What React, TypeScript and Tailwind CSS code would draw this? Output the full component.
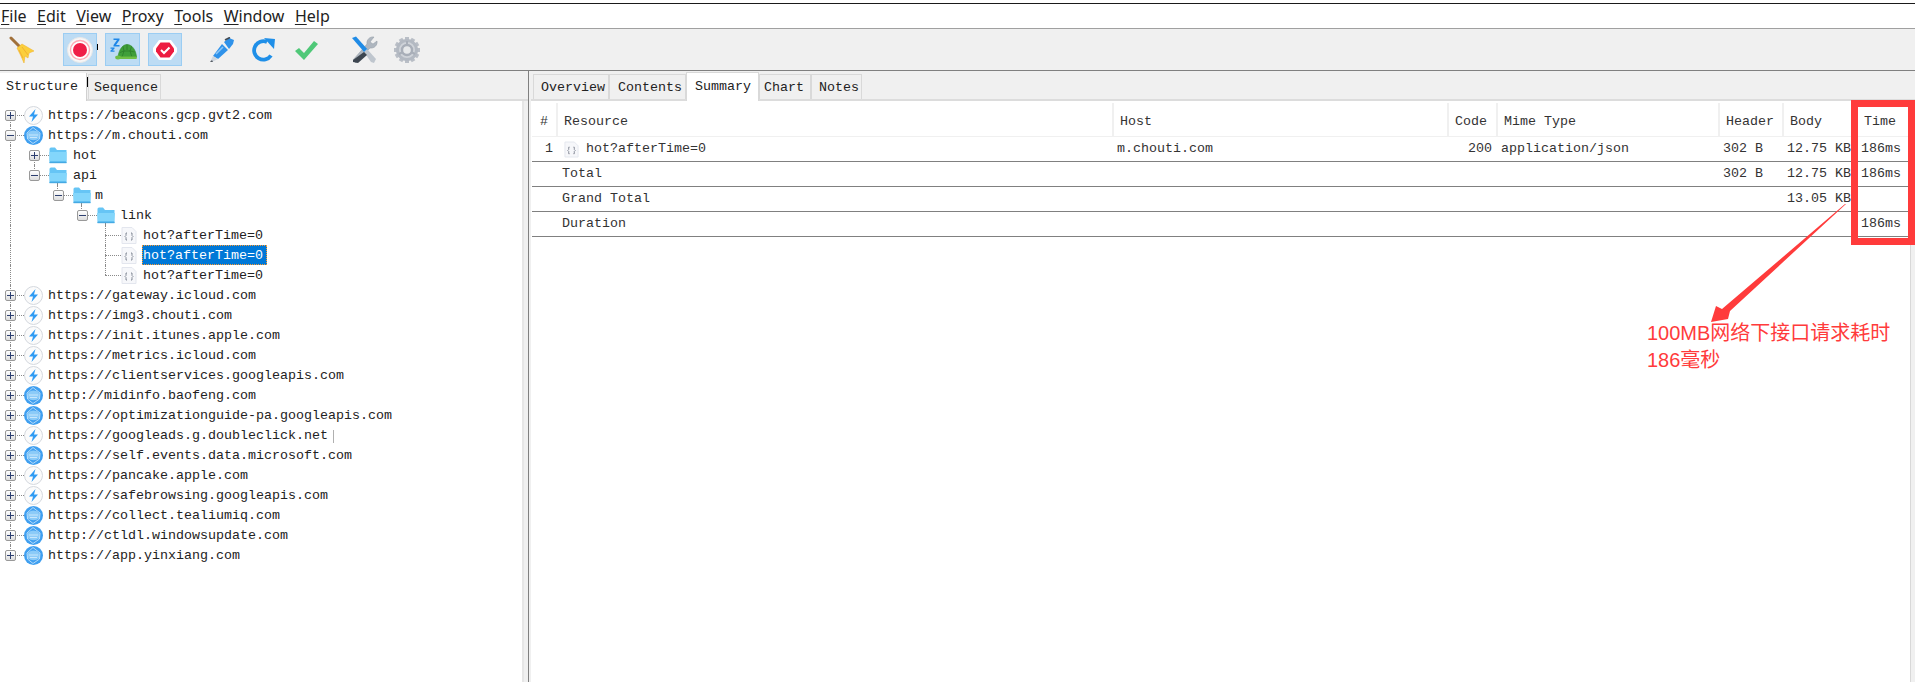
import React from "react";

const mono = "font-['Liberation_Mono','Noto_Sans_CJK_SC',monospace] text-[13.33px] text-[#222222]";

function Broom() {
  return (
    <svg width="26" height="28" viewBox="0 0 26 28">
      <path d="M2 2 L11 11" stroke="#a0703a" strokeWidth="3" strokeLinecap="round" />
      <path d="M8 12 L13 8 L25 15 L20 17 L19 22 L16 20 L15 27 L12 20 Z" fill="#fbcf3c" stroke="#f2b632" strokeWidth="0.6" />
      <path d="M13 11 L19 19 M10 14 L14 22" stroke="#f0a92c" strokeWidth="0.8" />
    </svg>
  );
}
function RecordIcon() {
  return (
    <svg width="26" height="26" viewBox="0 0 26 26">
      <circle cx="13" cy="13" r="12.5" fill="#f7f7f7" stroke="#e8e8e8" />
      <circle cx="13" cy="13" r="9.5" fill="#ffffff" stroke="#ffa9b5" strokeWidth="1.4" />
      <circle cx="13" cy="13" r="7" fill="#ef1e47" />
    </svg>
  );
}
function TurtleIcon() {
  return (
    <svg width="28" height="26" viewBox="0 0 28 26">
      <path d="M4.5 1.5 H10.5 V3 L7 8 H10.5 V9.5 H4.5 V8 L8 3 H4.5 Z" fill="#1f87e8" />
      <path d="M1.5 10.5 H5.5 V11.7 L3.4 13.5 H5.5 V14.7 H1.5 V13.5 L3.6 11.7 H1.5 Z" fill="#1f87e8" />
      <path d="M9 20 C10 12 14 7.5 18 7.5 C23 7.5 27 13 27.5 20 Z" fill="#3f9f3a" stroke="#2f8c2b" strokeWidth="0.6" />
      <path d="M14 9.5 L15 14 L13 20 M18 7.5 V13 M22.5 9.5 L21 14 L23 20 M15 14 H21 M11 15.5 L15 14 M25.5 15 L21 14" stroke="#2a7a28" strokeWidth="0.7" fill="none" />
      <ellipse cx="9" cy="20.5" rx="2.8" ry="1.9" fill="#6fbf45" />
      <rect x="9" y="19.5" width="19" height="2.4" rx="1.2" fill="#6fbf45" />
    </svg>
  );
}
function StopIcon() {
  return (
    <svg width="24" height="20" viewBox="0 0 24 20">
      <path d="M6 0 H18 L24 8 V12 L18 20 H6 L0 12 V8 Z" fill="#ffffff" />
      <path d="M7.5 2.5 H16.5 L21 8.5 V11.5 L16.5 17.5 H7.5 L3 11.5 V8.5 Z" fill="#ed1c40" />
      <path d="M8 10 L11 13 L16.5 7.5" fill="none" stroke="#ffffff" strokeWidth="2" />
    </svg>
  );
}
function PenIcon() {
  return (
    <svg width="26" height="26" viewBox="0 0 26 26">
      <path d="M15 5 L20 1 L25 3 L24 7 L20 12 Z" fill="#2f92ea" />
      <path d="M16 3 L21 0.5" stroke="#454c55" strokeWidth="1.8" />
      <path d="M13 7 L19 13 L9 22 L4 19 Z" fill="#2f92ea" />
      <path d="M4 19 L9 22 L3 25 L1 25 Z" fill="#cfd6de" />
      <path d="M1 25 L3 23 L4 25 Z" fill="#555b63" />
      <path d="M7 17 L14 10" stroke="#8cc6f6" strokeWidth="1.6" />
    </svg>
  );
}
function RefreshIcon() {
  return (
    <svg width="24" height="26" viewBox="0 0 24 26">
      <path d="M19 18.5 A9.2 9.2 0 1 1 15 5" fill="none" stroke="#1f8fe8" strokeWidth="3.8" />
      <path d="M12 1 L23 2 L22 12 Z" fill="#1f8fe8" />
    </svg>
  );
}
function CheckIcon() {
  return (
    <svg width="24" height="22" viewBox="0 0 24 22">
      <path d="M1 12 L5 9 L10 14 L20 2 L24 5 L10 21 Z" fill="#4fc878" />
    </svg>
  );
}
function ToolsIcon() {
  return (
    <svg width="27" height="28" viewBox="0 0 27 28">
      <path d="M23 1 A6 6 0 0 0 16 8 L2 24 L5 27 L19 12 A6 6 0 0 0 26 5 L22 8 L19 6 Z" fill="#aeb6bf" stroke="#8f98a3" strokeWidth="0.5" />
      <path d="M1 2 L5 0.5 L17 14 L14 17 Z" fill="#1f8be6" />
      <path d="M13 16 L16 13 L25 23 L23 27 L20 26 Z" fill="#bfc6ce" />
      <path d="M13 16 L16 19 L7 27 L2 26 L2 24 Z" fill="#3d4650" />
    </svg>
  );
}
function GearIcon() {
  const teeth = [0, 30, 60, 90, 120, 150, 180, 210, 240, 270, 300, 330];
  return (
    <svg width="26" height="26" viewBox="0 0 26 26">
      {teeth.map((a) => (
        <rect key={a} x="11" y="0" width="4" height="5" fill="#b9bec6" transform={`rotate(${a} 13 13)`} />
      ))}
      <circle cx="13" cy="13" r="9.5" fill="#cfd3d9" stroke="#b3b9c2" strokeWidth="3" />
      <circle cx="13" cy="13" r="5" fill="#e6e8ea" stroke="#a8aeb8" strokeWidth="2.4" />
      <path d="M13 4 V8 M5 17 L9 15 M21 17 L17 15" stroke="#a8aeb8" strokeWidth="2" />
    </svg>
  );
}
function BoltIcon() {
  return (
    <svg width="19" height="19" viewBox="0 0 19 19">
      <circle cx="9.5" cy="9.5" r="9" fill="#fbfbfb" stroke="#d4d8de" />
      <path d="M11.5 3 L5 10.5 H9 L7.5 16 L14 8.5 H10 Z" fill="#2f9bf3" />
    </svg>
  );
}
function GlobeIcon() {
  return (
    <svg width="19" height="19" viewBox="0 0 19 19">
      <circle cx="9.5" cy="9.5" r="9.5" fill="#3f9ff0" />
      <path d="M3.5 8 C5 3.5 13 3 15.5 8 L15.5 12 C12 15 7 15 3.5 12 Z" fill="#8ccbf8" />
      <path d="M3 7 L9 1.5 L16 7 L15.5 13 L9 17.5 L3.5 13 Z M5 9 H14 M6 11.5 H13" fill="none" stroke="#e4f3fe" strokeWidth="0.7" />
    </svg>
  );
}
function FolderIcon({ open }: { open?: boolean }) {
  return (
    <svg width="18" height="17" viewBox="0 0 18 17">
      <path d="M0.5 2 Q0.5 0.5 2 0.5 H6 L8 3 H17.5 V16 H0.5 Z" fill="#66c5f5" />
      <path d={open ? "M0 6 H18 L17 14 H1 Z" : "M0.5 5 H17.5 V14 H0.5 Z"} fill="#83d6fb" />
      <path d="M0.5 15.5 H17.5" stroke="#45a9e2" strokeWidth="1.4" />
    </svg>
  );
}
function JsonIcon({ small }: { small?: boolean }) {
  return (
    <svg width={small ? 15 : 16} height="17" viewBox="0 0 16 17">
      <path d="M1 0.5 H11 L15 4.5 V16.5 H1 Z" fill="#f6f7fa" stroke="#e3e6ee" />
      <path d="M6 6 H5 V8.5 L4 9.5 L5 10.5 V13 H6 M10 6 H11 V8.5 L12 9.5 L11 10.5 V13 H10" fill="none" stroke="#6b7280" strokeWidth="0.8" />
    </svg>
  );
}
function Expander({ open }: { open?: boolean }) {
  return (
    <span className="absolute top-[5px] w-[11px] h-[11px] rounded-[2px] border border-[#999999] bg-gradient-to-b from-white to-[#dddddd] flex items-center justify-center z-10">
      <span className="relative w-[7px] h-[1px] bg-[#2d3f70]">
        {!open && <span className="absolute left-[3px] top-[-3px] w-[1px] h-[7px] bg-[#2d3f70]" />}
      </span>
    </span>
  );
}

type Row = {
  t: string;
  lvl: number;
  icon: "bolt" | "globe" | "folder" | "leaf";
  open?: boolean;
  exp?: boolean;
  sel?: boolean;
  mark?: boolean;
  guides: [number, number, number][];
};

const G0: [number, number, number] = [10, 0, 20];
const hosts: [string, "bolt" | "globe"][] = [
  ["https://gateway.icloud.com", "bolt"],
  ["https://img3.chouti.com", "bolt"],
  ["https://init.itunes.apple.com", "bolt"],
  ["https://metrics.icloud.com", "bolt"],
  ["https://clientservices.googleapis.com", "bolt"],
  ["http://midinfo.baofeng.com", "globe"],
  ["https://optimizationguide-pa.googleapis.com", "globe"],
  ["https://googleads.g.doubleclick.net", "bolt"],
  ["https://self.events.data.microsoft.com", "globe"],
  ["https://pancake.apple.com", "bolt"],
  ["https://safebrowsing.googleapis.com", "bolt"],
  ["https://collect.tealiumiq.com", "globe"],
  ["http://ctldl.windowsupdate.com", "globe"],
  ["https://app.yinxiang.com", "globe"],
];
const rows: Row[] = [
  { t: "https://beacons.gcp.gvt2.com", lvl: 0, icon: "bolt", exp: true, guides: [[10, 10, 10]] },
  { t: "https://m.chouti.com", lvl: 0, icon: "globe", exp: true, open: true, guides: [G0] },
  { t: "hot", lvl: 1, icon: "folder", exp: true, guides: [G0, [34, 10, 10]] },
  { t: "api", lvl: 1, icon: "folder", exp: true, open: true, guides: [G0, [34, 0, 10], [57, 18, 2]] },
  { t: "m", lvl: 2, icon: "folder", exp: true, open: true, guides: [G0, [57, 0, 10], [81, 18, 2]] },
  { t: "link", lvl: 3, icon: "folder", exp: true, open: true, guides: [G0, [81, 0, 10], [105, 18, 2]] },
  { t: "hot?afterTime=0", lvl: 4, icon: "leaf", guides: [G0, [105, 0, 20]] },
  { t: "hot?afterTime=0", lvl: 4, icon: "leaf", sel: true, guides: [G0, [105, 0, 20]] },
  { t: "hot?afterTime=0", lvl: 4, icon: "leaf", guides: [G0, [105, 0, 10]] },
  ...hosts.map(([t, icon], i): Row => ({
    t,
    icon,
    lvl: 0,
    exp: true,
    mark: t.includes("doubleclick"),
    guides: [i === hosts.length - 1 ? [10, 0, 10] : G0],
  })),
];

const levelX = [10, 34, 58, 82, 105];

function TreeRow({ r }: { r: Row }) {
  const cx = levelX[r.lvl];
  const iconLeft = r.lvl === 0 ? 24 : r.lvl === 1 ? 49 : r.lvl === 2 ? 73 : r.lvl === 3 ? 97 : 121;
  const textLeft = r.lvl === 0 ? 48 : r.lvl === 1 ? 73 : r.lvl === 2 ? 95 : r.lvl === 3 ? 120 : 143;
  return (
    <div className="relative h-5 flex items-center whitespace-nowrap">
      {r.guides.map(([x, top, h], i) => (
        <span
          key={i}
          className="absolute w-0 border-l border-dotted border-[#8a8a8a]"
          style={{ left: x, top, height: h }}
        />
      ))}
      <span
        className="absolute top-[10px] h-0 border-t border-dotted border-[#8a8a8a]"
        style={{ left: cx, width: iconLeft - cx }}
      />
      {r.exp && (
        <span className="absolute top-0 h-5 w-[11px]" style={{ left: cx - 5 }}>
          <Expander open={r.open} />
        </span>
      )}
      <span className="absolute flex items-center h-5" style={{ left: iconLeft }}>
        {r.icon === "bolt" && <BoltIcon />}
        {r.icon === "globe" && <GlobeIcon />}
        {r.icon === "folder" && <FolderIcon open={r.open} />}
        {r.icon === "leaf" && <JsonIcon />}
      </span>
      {r.sel ? (
        <span
          className="absolute top-0 h-5 leading-[19px] w-[125px] bg-[#0078d7] text-white border border-dotted border-[#ff9a2e] font-['Liberation_Mono',monospace] text-[13.33px]"
          style={{ left: 142 }}
        >
          {r.t}
        </span>
      ) : (
        <span className={`absolute pt-px ${mono}`} style={{ left: textLeft }}>
          {r.t}
        </span>
      )}
      {r.mark && <span className="absolute left-[333px] top-[5px] w-px h-[13px] bg-[#b0b0b0]" />}
    </div>
  );
}

const cols = "grid grid-cols-[24px_556px_335px_49px_222px_64px_74px_52px]";

function HeaderCell({ children, pl = "pl-[6px] border-l-2 border-[#f0f0f0]" }: { children?: React.ReactNode; pl?: string }) {
  return <div className={`h-[33px] pt-[5px] flex items-center ${pl} ${mono} text-[#333333]`}>{children}</div>;
}

function Cell({ children, cls = "" }: { children?: React.ReactNode; cls?: string }) {
  return <div className={`flex items-center whitespace-nowrap overflow-hidden ${mono} text-[#333333] ${cls}`}>{children}</div>;
}

function SumRow({ a, c, d, e }: { a: string; c?: string; d?: string; e?: string }) {
  return (
    <div className={`${cols} h-[25px] border-b border-[#808080]`}>
      <Cell />
      <Cell cls="pl-[6px]">{a}</Cell>
      <Cell />
      <Cell />
      <Cell />
      <Cell cls="pl-[5px]">{c}</Cell>
      <Cell cls="pl-[5px]">{d}</Cell>
      <Cell cls="pl-[5px]">{e}</Cell>
    </div>
  );
}

export default function App() {
  const menus: [string, string][] = [
    ["F", "ile"],
    ["E", "dit"],
    ["V", "iew"],
    ["P", "roxy"],
    ["T", "ools"],
    ["W", "indow"],
    ["H", "elp"],
  ];
  const rightTabs = [
    { t: "Overview", w: "w-[76px] pl-[7px]" },
    { t: "Contents", w: "w-[77px] pl-[8px]" },
    { t: "Summary", w: "w-[73px] pl-[8px]", active: true },
    { t: "Chart", w: "w-[52px] pl-[4px]" },
    { t: "Notes", w: "w-[51px] pl-[7px]" },
  ];
  return (
    <div className="relative w-[1915px] h-[682px] overflow-hidden bg-white flex flex-col">
      <div className="h-[3px] bg-white" />
      <div className="h-px bg-[#1a1a1a]" />
      {/* menu */}
      <div className="h-6 flex items-center gap-[10.5px] pl-px font-['Noto_Sans','Noto_Sans_CJK_SC',sans-serif] text-[16px] text-[#222222]">
        {menus.map(([u, rest]) => (
          <span key={u}>
            <span className="underline underline-offset-2">{u}</span>
            {rest}
          </span>
        ))}
      </div>
      <div className="h-px bg-[#a0a0a0]" />
      {/* toolbar */}
      <div className="h-[42px] bg-[#f0f0f0] flex items-center border-b border-[#808080] relative">
        <span className="ml-[9px] w-[26px] flex"><Broom /></span>
        <span className="ml-[28px] w-[34px] h-[33px] bg-[#bddcf4] border border-[#9bcdf3] flex items-center justify-center relative">
          <RecordIcon />
          <span className="absolute right-[-2px] top-[10px] w-px h-[6px] bg-black" />
        </span>
        <span className="ml-[8px] w-[35px] h-[33px] bg-[#bddcf4] border border-[#9bcdf3] flex items-center justify-center"><TurtleIcon /></span>
        <span className="ml-[8px] w-[34px] h-[33px] bg-[#bddcf4] border border-[#9bcdf3] flex items-center justify-center"><StopIcon /></span>
        <span className="ml-[27px] w-[26px] flex"><PenIcon /></span>
        <span className="ml-[17px] w-[24px] flex"><RefreshIcon /></span>
        <span className="ml-[18px] w-[24px] flex"><CheckIcon /></span>
        <span className="ml-[33px] w-[27px] flex"><ToolsIcon /></span>
        <span className="ml-[16px] w-[26px] flex"><GearIcon /></span>
      </div>
      {/* panes */}
      <div className="flex-1 flex min-h-0">
        {/* left */}
        <div className="w-[528px] flex flex-col shrink-0 bg-[#f0f0f0]">
          <div className="h-[30px] flex items-end border-b-2 border-[#dcdcdc] pr-[4px]">
            <div className={`w-[87px] h-[28px] -mb-[2px] bg-white border-r border-[#d0d0d0] flex items-center pl-[6px] relative ${mono}`}>
              Structure
              <span className="absolute right-[-2px] top-[4px] w-px h-[10px] bg-black" />
            </div>
            <div className={`ml-px w-[73px] h-[25px] pt-[2px] border border-b-0 border-[#d9d9d9] flex items-center pl-[5px] ${mono}`}>Sequence</div>
          </div>
          <div className="flex-1 pt-[4px] mr-[4px] bg-white border-r-2 border-[#e6e6e6]">
            {rows.map((r, i) => (
              <TreeRow key={i} r={r} />
            ))}
          </div>
        </div>
        {/* splitter */}
        <div className="w-[3px] bg-[#f0f0f0] border-l border-[#808080] shrink-0" />
        {/* right */}
        <div className="flex-1 flex flex-col min-w-0">
          <div className="h-[30px] bg-[#f0f0f0] flex items-end pl-[2px] border-b-2 border-[#dcdcdc]">
            {rightTabs.map((t) => (
              <div
                key={t.t}
                className={`${t.w} flex items-center ${mono} ${
                  t.active
                    ? "h-[29px] -mb-[2px] bg-white border border-b-0 border-[#d9d9d9] pb-[1px]"
                    : "h-[25px] pt-[2px] border border-b-0 border-[#d9d9d9]"
                }`}
              >
                {t.t}
              </div>
            ))}
          </div>
          <div className="flex-1 flex min-h-0">
            <div className="flex-1 pl-px">
              <div className={`${cols} mt-[2px] border-b border-[#f0f0f0]`}>
                <HeaderCell pl="pl-[8px]">#</HeaderCell>
                <HeaderCell>Resource</HeaderCell>
                <HeaderCell>Host</HeaderCell>
                <HeaderCell>Code</HeaderCell>
                <HeaderCell>Mime Type</HeaderCell>
                <HeaderCell>Header</HeaderCell>
                <HeaderCell>Body</HeaderCell>
                <HeaderCell>Time</HeaderCell>
              </div>
              <div className={`${cols} h-[25px] border-b border-[#808080]`}>
                <Cell cls="justify-end pr-[3px]">1</Cell>
                <Cell cls="pl-[8px] gap-[7px]"><JsonIcon small />hot?afterTime=0</Cell>
                <Cell cls="pl-[5px]">m.chouti.com</Cell>
                <Cell cls="justify-end pr-[4px]">200</Cell>
                <Cell cls="pl-[5px]">application/json</Cell>
                <Cell cls="pl-[5px]">302 B</Cell>
                <Cell cls="pl-[5px]">12.75 KB</Cell>
                <Cell cls="pl-[5px]">186ms</Cell>
              </div>
              <SumRow a="Total" c="302 B" d="12.75 KB" e="186ms" />
              <SumRow a="Grand Total" d="13.05 KB" />
              <SumRow a="Duration" e="186ms" />
            </div>
            <div className="w-[5px] bg-[#f0f0f0] border-l border-[#d8d8d8] shrink-0" />
          </div>
        </div>
      </div>
      {/* annotation */}
      <div className="absolute left-[1851px] top-[100px] w-[64px] h-[145px] border-[7px] border-[#ff3b3b]" />
      <svg className="absolute left-[1700px] top-[200px]" width="160" height="130" viewBox="0 0 160 130">
        <polygon points="146,4 30,111 28,119 11,122 16,106 22,109 145,4" fill="#ff3b3b" />
      </svg>
      <div className="absolute left-[1647px] top-[320px] font-['Liberation_Sans','Noto_Sans_CJK_SC',sans-serif] text-[20px] leading-[27px] text-[#ff3b3b] whitespace-nowrap">
        <div>100MB网络下接口请求耗时</div>
        <div>186毫秒</div>
      </div>
    </div>
  );
}
